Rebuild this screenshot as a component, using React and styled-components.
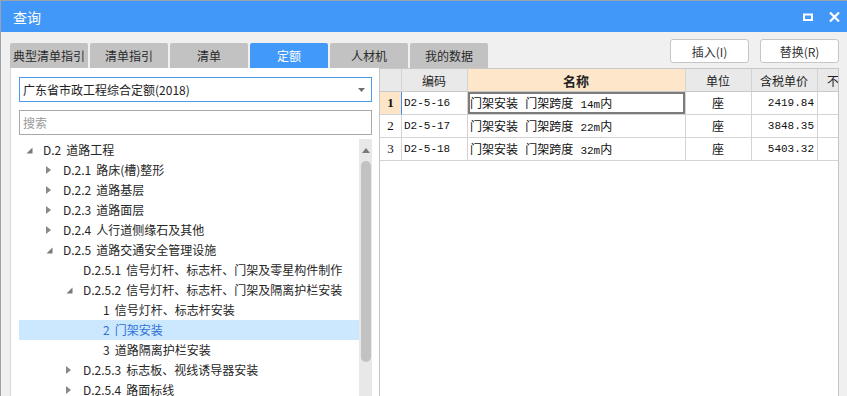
import React from "react";
import styled, { createGlobalStyle } from "styled-components";

const GlobalStyle = createGlobalStyle`
  html, body {
    margin: 0;
    padding: 0;
    background: #f0f0f0;
  }
  body {
    font-family: "Noto Sans CJK SC", "Noto Sans", sans-serif;
  }
`;

const Window = styled.div`
  width: 847px;
  height: 396px;
  box-sizing: border-box;
  border-top: 1px solid #9aa3ad;
  border-left: 1px solid #9aa3ad;
  background: #f0f0f0;
  display: flex;
  flex-direction: column;
  overflow: hidden;
`;

const TitleBar = styled.div`
  height: 31px;
  flex: none;
  background: #4298f8;
  display: flex;
  align-items: center;
  padding: 0 0 0 12px;
`;

const Title = styled.span`
  color: #fff;
  font-size: 14px;
  line-height: 20px;
  flex: 1;
`;

const TitleButton = styled.button`
  width: 26px;
  height: 24px;
  border: 0;
  padding: 0;
  background: transparent;
  display: flex;
  align-items: center;
  justify-content: center;
`;

const Body = styled.div`
  flex: 1;
  min-height: 0;
  display: flex;
  flex-direction: column;
  padding: 7px 8px 0 9px;
`;

const Toolbar = styled.div`
  height: 29px;
  flex: none;
  display: flex;
  align-items: flex-start;
`;

const Tabs = styled.div`
  display: flex;
  gap: 2px;
  align-self: flex-end;
  flex: 1;
`;

const Tab = styled.div`
  width: 78px;
  height: 25px;
  border-radius: 2px 2px 0 0;
  background: ${(p) => (p.$active ? "#419af9" : "#c2c2c2")};
  color: ${(p) => (p.$active ? "#fff" : "#2a2a2a")};
  font-size: 12px;
  line-height: 25px;
  text-align: center;
  white-space: nowrap;
  overflow: hidden;
`;

const Actions = styled.div`
  display: flex;
  gap: 11px;
`;

const ActionButton = styled.button`
  width: 79px;
  height: 24px;
  box-sizing: border-box;
  border: 1px solid #c6c6c6;
  border-radius: 3px;
  background: #fff;
  color: #333;
  font-family: "Noto Sans CJK SC", "Noto Sans", sans-serif;
  font-size: 12px;
  padding: 0;
`;

const Main = styled.div`
  flex: 1;
  min-height: 0;
  display: flex;
`;

const LeftPanel = styled.div`
  width: 370px;
  flex: none;
  box-sizing: border-box;
  background: #fff;
  border-left: 1px solid #d8d8d8;
  border-right: 1px solid #c4c4c4;
  padding: 9px 7px 0 8px;
  display: flex;
  flex-direction: column;
  gap: 8px;
  overflow: hidden;
`;

const Select = styled.div`
  height: 25px;
  box-sizing: border-box;
  border: 1px solid #4a9af2;
  display: flex;
  align-items: center;
  padding: 0 6px 0 3px;
  font-size: 12px;
  color: #222;
`;

const SelectText = styled.span`
  flex: 1;
`;

const SearchBox = styled.div`
  height: 25px;
  box-sizing: border-box;
  border: 1px solid #a9a9a9;
  display: flex;
  align-items: center;
  padding: 0 3px;
  font-size: 12px;
  color: #9a9a9a;
`;

const TreeArea = styled.div`
  flex: 1;
  min-height: 0;
  display: flex;
  margin-top: -4px;
`;

const TreeList = styled.div`
  flex: 1;
  padding-top: 1px;
`;

const TreeRow = styled.div`
  height: 20px;
  display: flex;
  align-items: center;
  padding-left: ${(p) => 4 + p.$level * 20}px;
  background: ${(p) => (p.$selected ? "#cce8ff" : "transparent")};
  color: ${(p) => (p.$selected ? "#2f72d6" : "#262626")};
  font-size: 12px;
  line-height: 20px;
  white-space: nowrap;
`;

const Toggle = styled.span`
  width: 20px;
  flex: none;
  display: flex;
  align-items: center;
  padding-left: 3px;
  box-sizing: border-box;
`;

const Gap = styled.span`
  display: inline-block;
  width: 5px;
`;

const ScrollTrack = styled.div`
  width: 13px;
  flex: none;
  background: #e8e8e8;
  display: flex;
  flex-direction: column;
  align-items: center;
`;

const ScrollArrow = styled.div`
  height: 22px;
  display: flex;
  align-items: center;
  justify-content: center;
`;

const ScrollThumb = styled.div`
  width: 10px;
  height: 201px;
  border-radius: 5px;
  background: #c2c2c2;
`;

const RightPanel = styled.div`
  flex: 1;
  min-width: 0;
  background: #fff;
  border-top: 1px solid #c8c8c8;
  border-right: 1px solid #c4c4c4;
  overflow: hidden;
`;

const GridRow = styled.div`
  display: grid;
  grid-template-columns: 22px 66px 218px 66px 66px 80px;
  height: 23px;
`;

const Cell = styled.div`
  box-sizing: border-box;
  border-right: 1px solid ${(p) => (p.$current ? "#3d8ef0" : "#d4d4d4")};
  border-bottom: 1px solid #d4d4d4;
  display: flex;
  align-items: center;
  justify-content: ${(p) =>
    p.$align === "right" ? "flex-end" : p.$align === "center" ? "center" : "flex-start"};
  padding: 0 3px 0 2px;
  background: ${(p) => p.$bg || "#fff"};
  box-shadow: ${(p) => (p.$focused ? "inset 0 0 0 2px #7b7b7b" : "none")};
  font-family: "Liberation Mono", "Noto Sans CJK SC", monospace;
  font-size: 12px;
  color: #111;
  white-space: pre;
  overflow: hidden;
`;

const HeadCell = styled(Cell)`
  background: ${(p) => (p.$hot ? "#fde6c9" : "#e9e9e9")};
  border-bottom-color: #c9c9c9;
  font-family: "Noto Sans CJK SC", "Noto Sans", sans-serif;
  font-size: ${(p) => (p.$hot ? "13px" : "12px")};
  font-weight: ${(p) => (p.$hot ? 700 : 400)};
  color: #222;
`;

const RowNum = styled(Cell)`
  font-family: "Liberation Serif", "Noto Sans CJK SC", serif;
  font-weight: ${(p) => (p.$current ? 700 : 400)};
  font-size: 13px;
  padding: 0;
`;

const Num = styled.span`
  font-size: 11px;
`;

function Caret({ open }) {
  return open ? (
    <svg width="7" height="7" viewBox="0 0 7 7">
      <path d="M6.5 0.5 L6.5 6.5 L0.5 6.5 Z" fill="#7a7a7a" />
    </svg>
  ) : (
    <svg width="5" height="8" viewBox="0 0 5 8">
      <path d="M0 0 L5 4 L0 8 Z" fill="#8a8a8a" />
    </svg>
  );
}

const tree = [
  { level: 0, code: "D.2", label: "道路工程", open: true },
  { level: 1, code: "D.2.1", label: "路床(槽)整形", open: false },
  { level: 1, code: "D.2.2", label: "道路基层", open: false },
  { level: 1, code: "D.2.3", label: "道路面层", open: false },
  { level: 1, code: "D.2.4", label: "人行道侧缘石及其他", open: false },
  { level: 1, code: "D.2.5", label: "道路交通安全管理设施", open: true },
  { level: 2, code: "D.2.5.1", label: "信号灯杆、标志杆、门架及零星构件制作" },
  { level: 2, code: "D.2.5.2", label: "信号灯杆、标志杆、门架及隔离护栏安装", open: true },
  { level: 3, code: "1", label: "信号灯杆、标志杆安装" },
  { level: 3, code: "2", label: "门架安装", selected: true },
  { level: 3, code: "3", label: "道路隔离护栏安装" },
  { level: 2, code: "D.2.5.3", label: "标志板、视线诱导器安装", open: false },
  { level: 2, code: "D.2.5.4", label: "路面标线", open: false },
];

const rows = [
  { no: "1", code: "D2-5-16", span: "14m", unit: "座", price: "2419.84" },
  { no: "2", code: "D2-5-17", span: "22m", unit: "座", price: "3848.35" },
  { no: "3", code: "D2-5-18", span: "32m", unit: "座", price: "5403.32" },
];

const tabs = ["典型清单指引", "清单指引", "清单", "定额", "人材机", "我的数据"];

export default function App() {
  return (
    <>
      <GlobalStyle />
      <Window>
        <TitleBar>
          <Title>查询</Title>
          <TitleButton>
            <svg width="10" height="8" viewBox="0 0 10 8">
              <rect x="1" y="1.5" width="8" height="5.5" fill="none" stroke="#fff" strokeWidth="2" />
            </svg>
          </TitleButton>
          <TitleButton>
            <svg width="11" height="10" viewBox="0 0 11 10">
              <path d="M1 0.5 L10 9.5 M10 0.5 L1 9.5" stroke="#fff" strokeWidth="2.2" />
            </svg>
          </TitleButton>
        </TitleBar>
        <Body>
          <Toolbar>
            <Tabs>
              {tabs.map((t) => (
                <Tab key={t} $active={t === "定额"}>
                  {t}
                </Tab>
              ))}
            </Tabs>
            <Actions>
              <ActionButton>插入(I)</ActionButton>
              <ActionButton>替换(R)</ActionButton>
            </Actions>
          </Toolbar>
          <Main>
            <LeftPanel>
              <Select>
                <SelectText>广东省市政工程综合定额(2018)</SelectText>
                <svg width="7" height="4" viewBox="0 0 7 4">
                  <path d="M0 0 L7 0 L3.5 4 Z" fill="#6f6f6f" />
                </svg>
              </Select>
              <SearchBox>搜索</SearchBox>
              <TreeArea>
                <TreeList>
                  {tree.map((n) => (
                    <TreeRow key={n.code} $level={n.level} $selected={n.selected}>
                      <Toggle>{n.open !== undefined && <Caret open={n.open} />}</Toggle>
                      <span>{n.code}</span>
                      <Gap />
                      <span>{n.label}</span>
                    </TreeRow>
                  ))}
                </TreeList>
                <ScrollTrack>
                  <ScrollArrow>
                    <svg width="8" height="5" viewBox="0 0 8 5">
                      <path d="M0 5 L4 0 L8 5 Z" fill="#7a7a7a" />
                    </svg>
                  </ScrollArrow>
                  <ScrollThumb />
                </ScrollTrack>
              </TreeArea>
            </LeftPanel>
            <RightPanel>
              <GridRow>
                <HeadCell />
                <HeadCell $align="center">编码</HeadCell>
                <HeadCell $align="center" $hot>
                  名称
                </HeadCell>
                <HeadCell $align="center">单位</HeadCell>
                <HeadCell $align="center">含税单价</HeadCell>
                <HeadCell $align="center">不含税单价</HeadCell>
              </GridRow>
              {rows.map((r, i) => (
                <GridRow key={r.no}>
                  <RowNum $align="center" $current={i === 0} $bg={i === 0 ? "#fde5c8" : "#fff"}>
                    {r.no}
                  </RowNum>
                  <Cell>
                    <Num>{r.code}</Num>
                  </Cell>
                  <Cell $focused={i === 0}>
                    <span>
                      门架安装 门架跨度 <Num>{r.span}</Num>内
                    </span>
                  </Cell>
                  <Cell $align="center">{r.unit}</Cell>
                  <Cell $align="right">
                    <Num>{r.price}</Num>
                  </Cell>
                  <Cell />
                </GridRow>
              ))}
            </RightPanel>
          </Main>
        </Body>
      </Window>
    </>
  );
}
